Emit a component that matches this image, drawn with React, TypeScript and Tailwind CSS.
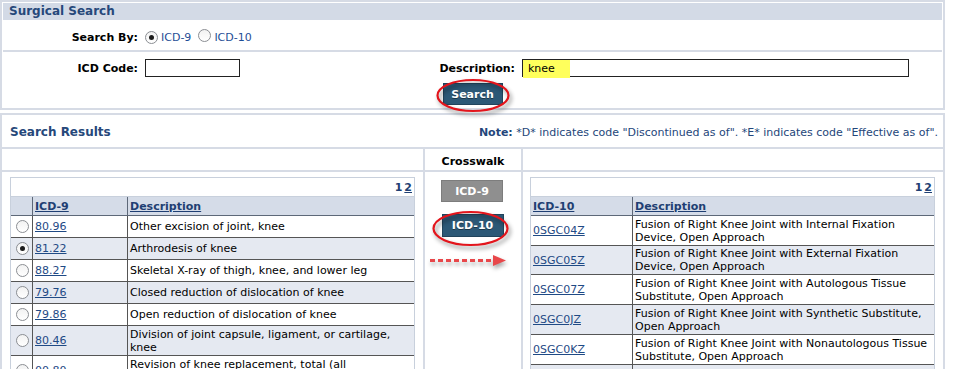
import React from 'react';

function Radio({ checked }: { checked?: boolean }) {
  return (
    <span className="inline-flex w-[13px] h-[13px] shrink-0 rounded-full border border-[#8b8e93] bg-gradient-to-b from-[#f2f2f2] to-white items-center justify-center">
      {checked && <span className="w-[5px] h-[5px] rounded-full bg-[#1c1c1c]" />}
    </span>
  );
}

type LeftRow = { code: string; lines: string[]; shaded?: boolean; checked?: boolean; h: string };
const leftRows: LeftRow[] = [
  { code: '80.96', lines: ['Other excision of joint, knee'], h: 'h-[22px]' },
  { code: '81.22', lines: ['Arthrodesis of knee'], shaded: true, checked: true, h: 'h-[22px]' },
  { code: '88.27', lines: ['Skeletal X-ray of thigh, knee, and lower leg'], h: 'h-[22px]' },
  { code: '79.76', lines: ['Closed reduction of dislocation of knee'], shaded: true, h: 'h-[22px]' },
  { code: '79.86', lines: ['Open reduction of dislocation of knee'], h: 'h-[22px]' },
  { code: '80.46', lines: ['Division of joint capsule, ligament, or cartilage,', 'knee'], shaded: true, h: 'h-[30px]' },
  { code: '00.80', lines: ['Revision of knee replacement, total (all', 'components)'], h: 'h-[30px]' },
];

type RightRow = { code: string; lines: string[]; shaded?: boolean; h: string };
const rightRows: RightRow[] = [
  { code: '0SGC04Z', lines: ['Fusion of Right Knee Joint with Internal Fixation', 'Device, Open Approach'], h: 'h-[30px]' },
  { code: '0SGC05Z', lines: ['Fusion of Right Knee Joint with External Fixation', 'Device, Open Approach'], shaded: true, h: 'h-[29px]' },
  { code: '0SGC07Z', lines: ['Fusion of Right Knee Joint with Autologous Tissue', 'Substitute, Open Approach'], h: 'h-[30px]' },
  { code: '0SGC0JZ', lines: ['Fusion of Right Knee Joint with Synthetic Substitute,', 'Open Approach'], shaded: true, h: 'h-[30px]' },
  { code: '0SGC0KZ', lines: ['Fusion of Right Knee Joint with Nonautologous Tissue', 'Substitute, Open Approach'], h: 'h-[30px]' },
  { code: '0SGC0ZZ', lines: ['Fusion of Right Knee Joint, Open Approach'], shaded: true, h: 'h-[30px]' },
];

function Pager() {
  return (
    <div className="h-[18px] flex justify-end items-center pr-[2px] font-bold text-[#1f3f73] text-[11px]">
      <span>1</span>
      <span className="ml-[2px] underline">2</span>
    </div>
  );
}

function LeftTable() {
  return (
    <div className="w-[405px] border border-[#c8d0dc] border-b-0">
      <Pager />
      <div className="h-[20px] flex bg-[#d5dce8] border-t border-t-[#c8d0dc] border-b border-b-[#5d6878]">
        <div className="w-[21px]" />
        <div className="w-[95px] border-l border-[#5d6878] pl-[2px] flex items-center font-bold underline text-[#1f3f73]">ICD-9</div>
        <div className="flex-1 border-l border-[#5d6878] pl-[2px] flex items-center font-bold underline text-[#1f3f73]">Description</div>
      </div>
      {leftRows.map((r) => (
        <div key={r.code} className={`${r.h} flex border-b border-[#555] ${r.shaded ? 'bg-[#e5e9f1]' : 'bg-white'}`}>
          <div className="w-[21px] flex items-center justify-center pl-[1px]">
            <Radio checked={r.checked} />
          </div>
          <div className="w-[95px] border-l border-[#555] pl-[2px] flex items-center">
            <span className="underline text-[#1f4a85]">{r.code}</span>
          </div>
          <div className="flex-1 border-l border-[#555] pl-[2px] flex flex-col justify-center whitespace-nowrap">
            {r.lines.map((l) => (
              <div key={l}>{l}</div>
            ))}
          </div>
        </div>
      ))}
    </div>
  );
}

function RightTable() {
  return (
    <div className="w-[405px] border border-[#c8d0dc] border-b-0">
      <Pager />
      <div className="h-[20px] flex bg-[#d5dce8] border-t border-t-[#c8d0dc] border-b border-b-[#5d6878]">
        <div className="w-[101px] pl-[2px] flex items-center font-bold underline text-[#1f3f73]">ICD-10</div>
        <div className="flex-1 border-l border-[#5d6878] pl-[2px] flex items-center font-bold underline text-[#1f3f73]">Description</div>
      </div>
      {rightRows.map((r) => (
        <div key={r.code} className={`${r.h} flex border-b border-[#555] ${r.shaded ? 'bg-[#e5e9f1]' : 'bg-white'}`}>
          <div className="w-[101px] pl-[2px] flex items-center">
            <span className="underline text-[#1f4a85]">{r.code}</span>
          </div>
          <div className="flex-1 border-l border-[#555] pl-[2px] flex flex-col justify-center whitespace-nowrap">
            {r.lines.map((l) => (
              <div key={l}>{l}</div>
            ))}
          </div>
        </div>
      ))}
    </div>
  );
}

export default function App() {
  return (
    <div className="relative w-[953px] h-[369px] overflow-hidden bg-white font-['DejaVu_Sans',sans-serif] text-[11px] leading-[13px] text-black">
      {/* Surgical Search panel */}
      <div className="w-[945px] border-2 border-[#d6dbe5] p-px">
        <div className="h-[17px] bg-[#d3dae6] pl-[6px] flex items-center font-bold text-[12px] text-[#26487a]">Surgical Search</div>
        <div className="h-[30px] pt-[4px] flex items-center">
          <div className="w-[135px] text-right font-bold">Search By:</div>
          <div className="ml-[7px] flex items-center">
            <Radio checked />
            <span className="ml-[3px] text-[#1f4e96]">ICD-9</span>
            <span className="ml-[7px]"><Radio /></span>
            <span className="ml-[3px] text-[#1f4e96]">ICD-10</span>
          </div>
        </div>
        <div className="h-[2px] bg-[#d6dbe5]" />
        <div className="pt-[7px] flex items-center">
          <div className="w-[135px] text-right font-bold">ICD Code:</div>
          <div className="ml-[7px] w-[95px] h-[18px] border border-[#222] bg-white" />
          <div className="w-[275px] text-right font-bold">Description:</div>
          <div className="ml-[7px] relative w-[387px] h-[18px] border border-[#222] bg-white">
            <div className="absolute left-0 top-0 w-[47px] h-[18px] bg-[#ffff5c]" />
            <span className="absolute left-[5px] top-[2px]">knee</span>
          </div>
        </div>
        <div className="pt-[6px] pb-[2px] flex justify-center">
          <div className="w-[60px] h-[22px] bg-[#2c5876] border border-[#21445c] text-white font-bold flex items-center justify-center [text-shadow:0_1px_0_rgba(0,0,0,0.4)]">Search</div>
        </div>
      </div>

      {/* Search Results panel */}
      <div className="mt-[3px] w-[945px] bg-[#d6dbe5] px-[2px] pt-[2px] flex flex-col gap-[2px]">
        <div className="h-[32px] pt-[3px] bg-white flex items-center justify-between pl-[8px] pr-[5px]">
          <span className="font-bold text-[12px] text-[#26487a]">Search Results</span>
          <span className="text-[#24467a]">
            <b>Note:</b> *D* indicates code "Discontinued as of". *E* indicates code "Effective as of".
          </span>
        </div>
        <div className="grid grid-cols-[421px_96px_420px] gap-[2px]">
          <div className="h-[21px] bg-white" />
          <div className="h-[21px] pt-[3px] bg-white flex items-center justify-center font-bold">Crosswalk</div>
          <div className="h-[21px] bg-white" />
        </div>
        <div className="grid grid-cols-[421px_96px_420px] gap-[2px] h-[230px]">
          <div className="bg-white pl-[8px] pt-[5px]">
            <LeftTable />
          </div>
          <div className="bg-white flex flex-col items-center pt-[8px]">
            <div className="w-[62px] h-[22px] bg-[#8f8f8f] border border-[#7d7d7d] text-white font-bold flex items-center justify-center -ml-[2px]">ICD-9</div>
            <div className="mt-[12px] w-[62px] h-[23px] bg-[#2c5876] border border-[#21445c] text-white font-bold flex items-center justify-center -ml-[1px] [text-shadow:0_1px_0_rgba(0,0,0,0.4)]">ICD-10</div>
          </div>
          <div className="bg-white pl-[7px] pt-[5px]">
            <RightTable />
          </div>
        </div>
      </div>

      {/* annotations */}
      <svg className="absolute left-[430px] top-[74px] drop-shadow-[2px_3px_2px_rgba(0,0,0,0.45)]" width="90" height="44">
        <ellipse cx="43" cy="21.5" rx="35.5" ry="15.5" fill="none" stroke="#e3151c" strokeWidth="2.2" />
      </svg>
      <svg className="absolute left-[428px] top-[208px] drop-shadow-[2px_3px_2px_rgba(0,0,0,0.45)]" width="90" height="44">
        <ellipse cx="42.5" cy="20.5" rx="37" ry="16.5" fill="none" stroke="#e3151c" strokeWidth="2.2" />
      </svg>
      <svg className="absolute left-[428px] top-[252px] drop-shadow-[1px_3px_2px_rgba(0,0,0,0.35)]" width="84" height="18">
        {[2, 10, 18, 26, 34, 42, 50, 58].map((x) => (
          <rect key={x} x={x} y="7" width="5" height="3" fill="#e8474a" />
        ))}
        <polygon points="65,3 78,8.5 65,14" fill="#e8474a" />
      </svg>
    </div>
  );
}
